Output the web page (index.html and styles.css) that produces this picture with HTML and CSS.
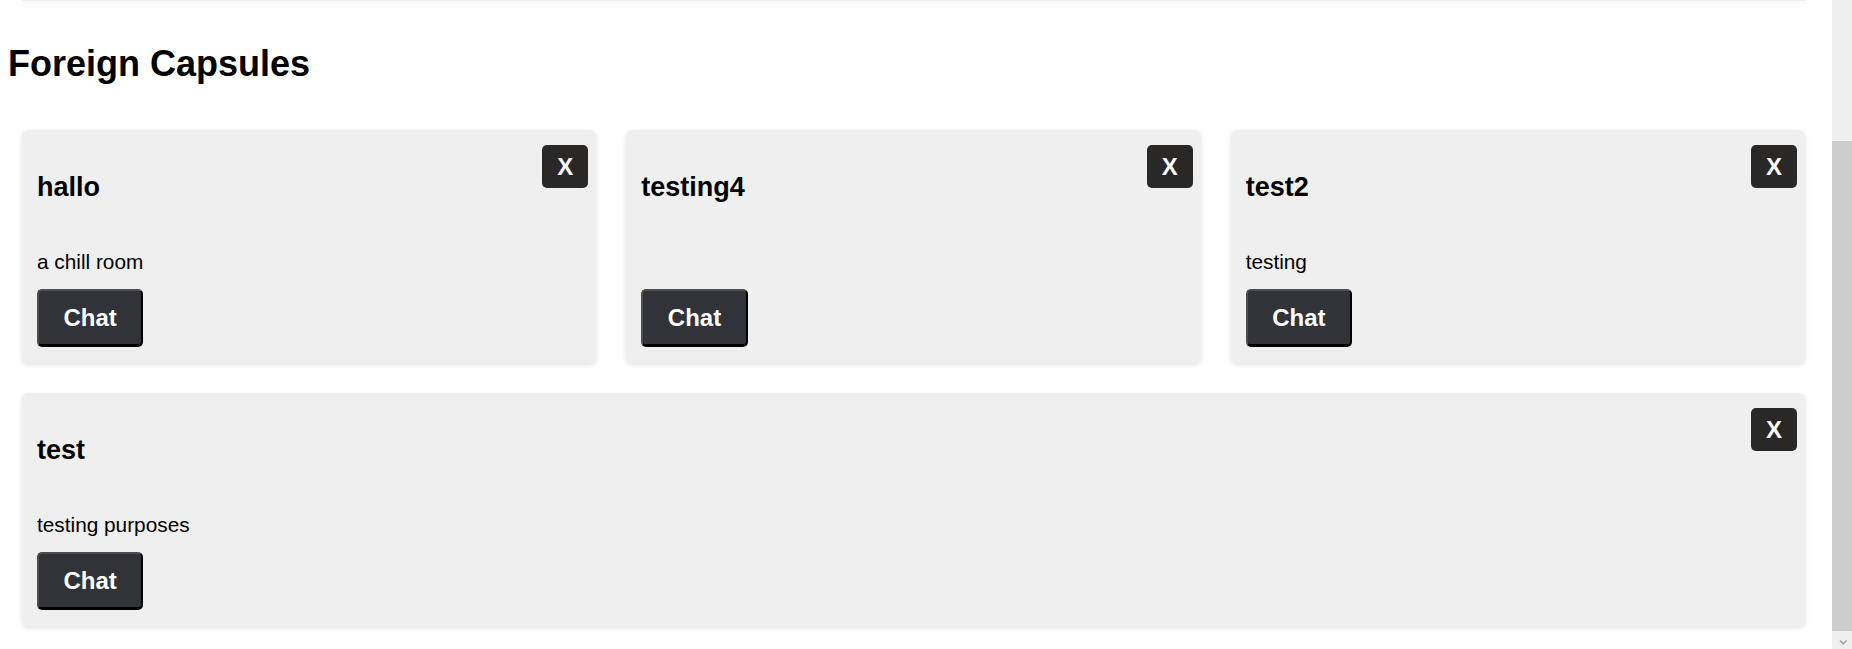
FILE: index.html
```html
<!DOCTYPE html>
<html lang="en">
<head>
<meta charset="utf-8">
<title>Capsules</title>
<link rel="stylesheet" href="styles.css">
</head>
<body>
<div class="app">
  <main class="page">
    <div class="prev-card" aria-hidden="true"></div>

    <section class="section">
      <h2 class="section-title">Foreign Capsules</h2>
      <div class="card-grid">
        <article class="card">
          <button class="close-btn" type="button">X</button>
          <h3 class="card-title">hallo</h3>
          <p class="card-desc">a chill room</p>
          <button class="chat-btn" type="button">Chat</button>
        </article>
        <article class="card">
          <button class="close-btn" type="button">X</button>
          <h3 class="card-title">testing4</h3>
          <p class="card-desc"></p>
          <button class="chat-btn" type="button">Chat</button>
        </article>
        <article class="card">
          <button class="close-btn" type="button">X</button>
          <h3 class="card-title">test2</h3>
          <p class="card-desc">testing</p>
          <button class="chat-btn" type="button">Chat</button>
        </article>
        <article class="card">
          <button class="close-btn" type="button">X</button>
          <h3 class="card-title">test</h3>
          <p class="card-desc">testing purposes</p>
          <button class="chat-btn" type="button">Chat</button>
        </article>
      </div>
    </section>
  </main>

  <div class="scrollbar" aria-hidden="true">
    <div class="scroll-track">
      <div class="scroll-thumb"></div>
    </div>
    <div class="scroll-arrow">
      <svg width="20" height="18" viewBox="0 0 20 18"><path d="M8 9.5l3.3 3.3 3.3-3.3" fill="none" stroke="#a6a6a6" stroke-width="1.6"/></svg>
    </div>
  </div>
</div>
</body>
</html>
```

FILE: styles.css
```css
html, body {
  margin: 0;
  background: #ffffff;
}

body {
  font-family: "Liberation Sans", Arial, sans-serif;
  color: #000;
}

.app {
  display: flex;
  height: 100vh;
  overflow: hidden;
}

.page {
  flex: 1 1 auto;
  min-width: 0;
  overflow: hidden;
  padding: 0 0 23px 0;
}

.prev-card {
  height: 1px;
  margin: 0 27px 0 22px;
  background: #efefef;
  box-shadow: 0 2px 5px rgba(0, 0, 0, 0.12);
}

.section-title {
  font-size: 36px;
  line-height: 40px;
  font-weight: bold;
  margin: 43px 0 46px 8px;
}

.card-grid {
  display: flex;
  flex-wrap: wrap;
  gap: 30px;
  padding: 0 27px 0 22px;
}

.card {
  position: relative;
  flex: 1 1 500px;
  box-sizing: border-box;
  padding: 15px 15px 16px 15px;
  background: #efefef;
  border-radius: 6px;
  box-shadow: 0 2px 5px rgba(0, 0, 0, 0.12);
}

.card-title {
  font-size: 27px;
  line-height: 30px;
  font-weight: bold;
  margin: 27px 0 0 0;
}

.card-desc {
  font-size: 20.8px;
  line-height: 23px;
  min-height: 23px;
  margin: 48px 0 16px 0;
}

.chat-btn {
  display: block;
  font-family: "Liberation Sans", Arial, sans-serif;
  font-size: 24px;
  line-height: 27px;
  font-weight: bold;
  color: #fff;
  background: #313338;
  padding: 13px 24.5px;
  border-style: solid;
  border-width: 2px 2px 3px 2px;
  border-color: #4d4d4f #000 #000 #4d4d4f;
  border-radius: 5px;
  cursor: pointer;
}

.close-btn {
  position: absolute;
  top: 15px;
  right: 8px;
  width: 46px;
  height: 43px;
  padding: 0;
  display: flex;
  align-items: center;
  justify-content: center;
  font-family: "Liberation Sans", Arial, sans-serif;
  font-size: 24px;
  font-weight: bold;
  color: #fff;
  background: #292826;
  border: none;
  border-radius: 5px;
  cursor: pointer;
}

.scrollbar {
  flex: 0 0 20px;
  display: flex;
  flex-direction: column;
  background: #f0f0f0;
}

.scroll-track {
  flex: 1 1 auto;
  display: flex;
  flex-direction: column;
  justify-content: flex-end;
}

.scroll-thumb {
  height: 490px;
  background: #cdcdcd;
}

.scroll-arrow {
  height: 18px;
  display: flex;
}
```
